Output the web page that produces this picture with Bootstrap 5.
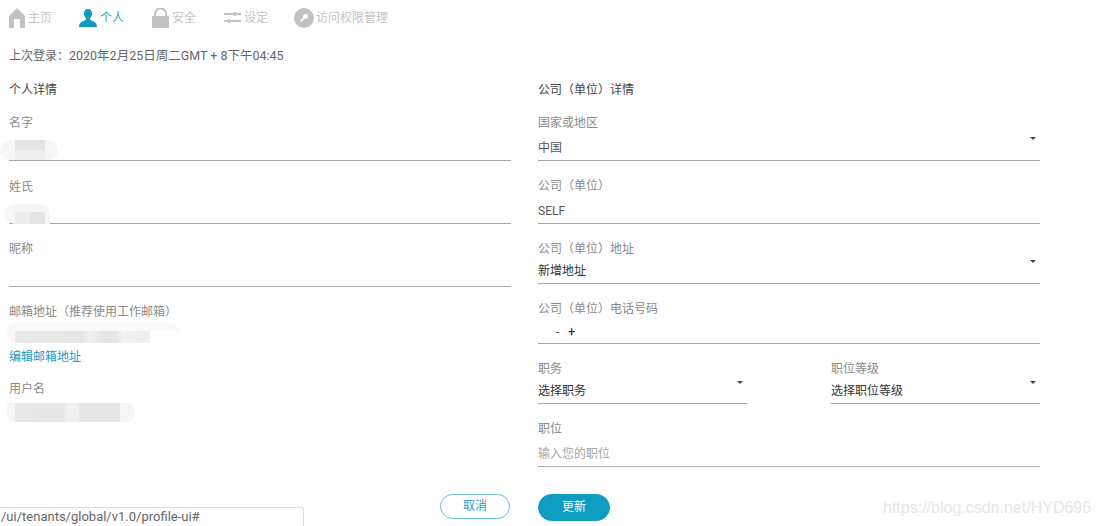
<!doctype html>
<html lang="zh-CN">
<head>
<meta charset="utf-8">
<title>个人</title>
<link rel="stylesheet" href="https://cdn.jsdelivr.net/npm/bootstrap@5.3.0/dist/css/bootstrap.min.css">
<style>
html,body{height:526px;overflow:hidden}
body{font-family:Roboto,"Noto Sans CJK SC",sans-serif;font-size:12px;color:#333;background:#fff;position:relative}
.sheet{padding:0 0 0 9px;width:1040px}
.topnav{height:36px;gap:28px}
.topnav a{color:#c4c4c4;text-decoration:none;display:flex;align-items:center;gap:3px;line-height:17px}
.topnav a.on{color:#2aa6c8;margin-left:-1px}
.topnav a.tight{margin-left:-2px;gap:2px}
.topnav svg{display:block;flex:none}
.lastlog{color:#666;line-height:17px;margin-top:11px;font-size:12.5px}
.lastlog .lead-in{font-size:12px}
.columns{gap:27px;margin-top:17px}
.pane{width:502px;flex:none}
.heading{line-height:17px;height:17px;color:#444;margin-bottom:16px}
.fld{border-bottom:1px solid #a8a8a8;position:relative}
.lbl{color:#8a8a8a;line-height:17px;display:block}
.val{line-height:17px;color:#555}
.ph{color:#a6a6a6}
.caret-dn{position:absolute;right:4px;width:0;height:0;border-left:3px solid transparent;border-right:3px solid transparent;border-top:3px solid #444}
.caret-1{top:22px}
.caret-3{top:19px}
.caret-5{top:20px}
.smudge{display:block;position:absolute}
.edit{color:#1a9dc0;text-decoration:none;line-height:17px;display:block}
.btn-pill{border-radius:14px;font-size:12px;line-height:17px;padding:0}
.btn-cancel{width:70px;height:25px;background:#fff;border:1px solid #6dbdd6;color:#1a9dc0;margin-right:1px}
.btn-save{width:72px;height:27px;background:#0e9cc0;border:1px solid #0e9cc0;color:#fff}
.statusline{position:absolute;left:0;bottom:0;width:304px;height:19px;border:1px solid #dedede;border-left:0;border-bottom:0;border-top-right-radius:3px;background:#fff;color:#666;font-size:13px;line-height:18px;padding-left:1px}
.mark-wm{position:absolute;left:883px;top:499px;color:#e6e6e6;font-size:16px;line-height:18px;font-family:"Liberation Sans",sans-serif}
.field-a{height:46px;margin-bottom:17px}
.field-a-l{height:46px;margin-bottom:18px}
.field-b{height:46px;margin-bottom:17px}
.field-b-l{height:45px;margin-bottom:17px}
.field-c{height:46px;margin-bottom:17px}
.field-d{height:45px}
.field-e{height:60px;margin-top:15px}
.field-r3{height:43px;margin-bottom:17px}
.half{width:209px}
.val-1,.val-2,.val-6{margin-top:8px}
.val-3{margin-top:5px;color:#333}
.val-4{margin-top:6px;color:#333}
.val-5{margin-top:5px;color:#333}
.dash{margin-left:18px;margin-right:9px}
.plus{font-weight:500}
.blur-a{left:-9px;top:25px;width:58px;height:20px;border-radius:10px;background:linear-gradient(#e4e4e4,#e4e4e4 50%,#eeeeee 50%) 15px 0/30px 100% no-repeat,#f6f6f6}
.blur-b{left:-4px;top:25px;width:45px;height:20px;border-radius:10px 10px 0 10px;background:linear-gradient(90deg,#ececec,#ececec 50%,#e4e4e4 50%) 10px 8px/30px 12px no-repeat,#f6f6f6}
.blur-d{left:-2px;top:19px;width:173px;height:20px;border-radius:10px 10px 0 10px;background:linear-gradient(90deg,#e9e9e9,#e6e6e6 50%,#f0f0f0 55%,#e6e6e6 65%,#e6e6e6 75%,#f2f2f2 80%,#eeeeee) 8px 8px/135px 12px no-repeat,linear-gradient(#f9f9f9,#f9f9f9) 0 0/100% 8px no-repeat,linear-gradient(#f9f9f9,#f9f9f9) 0 0/8px 100% no-repeat}
.blur-e{left:-2px;top:22px;width:128px;height:19px;border-radius:0 10px 10px 10px;background:linear-gradient(90deg,#e9e9e9,#e6e6e6 45%,#f0f0f0 50%,#f0f0f0 60%,#e6e6e6 62%,#e6e6e6 100%) 8px 0/105px 100% no-repeat,#f6f6f6}
.actions-l{margin-top:53px}
.actions-r{margin-top:27px}
</style>
</head>
<body>
<div class="sheet">
  <nav class="topnav d-flex align-items-center">
    <a href="#"><svg width="16" height="20" viewBox="0 0 16 20"><path d="M8 0 16 8V20H11V11H5V20H0V8Z" fill="#c2c2c2"/></svg>主页</a>
    <a href="#" class="on"><svg width="18" height="18" viewBox="0 0 18 18"><path d="M9 0c2.700 0 4 2 4 4.500 0 2-1 3.700-2 4.800v1.500c2.500 1.300 7 2 7 7.200H0c0-5.200 4.500-5.900 7-7.200V9.300C6 8.200 5 6.500 5 4.500 5 2 6.300 0 9 0Z" fill="#0e9cc0"/></svg>个人</a>
    <a href="#"><svg width="17" height="20" viewBox="0 0 17 20"><path d="M3 9V6a5.500 5.500 0 0 1 11 0v3" fill="none" stroke="#c2c2c2" stroke-width="2"/><rect y="8" width="17" height="12" rx="1" fill="#c2c2c2"/></svg>安全</a>
    <a href="#"><svg width="17" height="14" viewBox="0 0 17 14"><path d="M0 3h9M13 3h4M0 10h3M7 10h10" stroke="#c2c2c2" stroke-width="2" fill="none"/><circle cx="11" cy="3" r="2" fill="#c2c2c2"/><circle cx="5" cy="10" r="2" fill="#c2c2c2"/></svg>设定</a>
    <a href="#" class="tight"><svg width="20" height="20" viewBox="0 0 20 20"><circle cx="10" cy="10" r="10" fill="#c2c2c2"/><circle cx="11.500" cy="8.500" r="2.400" fill="#fff"/><path d="M10 10 6.500 13.500" stroke="#fff" stroke-width="1.600"/></svg>访问权限管理</a>
  </nav>
  <div class="lastlog"><span class="lead-in">上次登录：</span>2020年2月25日周二GMT + 8下午04:45</div>
  <form class="columns d-flex">
    <div class="pane">
      <div class="heading">个人详情</div>
      <div class="fld field-a-l">
        <label class="lbl">名字</label>
        <span class="smudge blur-a"></span>
      </div>
      <div class="fld field-b-l">
        <label class="lbl">姓氏</label>
        <span class="smudge blur-b"></span>
      </div>
      <div class="fld field-c">
        <label class="lbl">昵称</label>
      </div>
      <div class="field-d position-relative">
        <label class="lbl">邮箱地址（推荐使用工作邮箱）</label>
        <span class="smudge blur-d"></span>
      </div>
      <a href="#" class="edit">编辑邮箱地址</a>
      <div class="field-e position-relative">
        <label class="lbl">用户名</label>
        <span class="smudge blur-e"></span>
      </div>
      <div class="d-flex justify-content-end actions-l"><button type="button" class="btn btn-pill btn-cancel">取消</button></div>
    </div>
    <div class="pane">
      <div class="heading">公司（单位）详情</div>
      <div class="fld field-a">
        <label class="lbl">国家或地区</label>
        <span class="caret-dn caret-1"></span>
        <div class="val val-1">中国</div>
      </div>
      <div class="fld field-b">
        <label class="lbl">公司（单位）</label>
        <div class="val val-2">SELF</div>
      </div>
      <div class="fld field-r3">
        <label class="lbl">公司（单位）地址</label>
        <span class="caret-dn caret-3"></span>
        <div class="val val-3">新增地址</div>
      </div>
      <div class="fld field-r3">
        <label class="lbl">公司（单位）电话号码</label>
        <div class="val val-4"><span class="dash">-</span><span class="plus">+</span></div>
      </div>
      <div class="d-flex justify-content-between">
        <div class="fld field-r3 half">
          <label class="lbl">职务</label>
          <span class="caret-dn caret-5"></span>
          <div class="val val-5">选择职务</div>
        </div>
        <div class="fld field-r3 half">
          <label class="lbl">职位等级</label>
          <span class="caret-dn caret-5"></span>
          <div class="val val-5">选择职位等级</div>
        </div>
      </div>
      <div class="fld field-b">
        <label class="lbl">职位</label>
        <div class="val ph val-6">输入您的职位</div>
      </div>
      <div class="d-flex actions-r"><button type="button" class="btn btn-pill btn-save">更新</button></div>
    </div>
  </form>
</div>
<div class="statusline">/ui/tenants/global/v1.0/profile-ui#</div>
<div class="mark-wm">https://blog.csdn.net/HYD696</div>
</body>
</html>
